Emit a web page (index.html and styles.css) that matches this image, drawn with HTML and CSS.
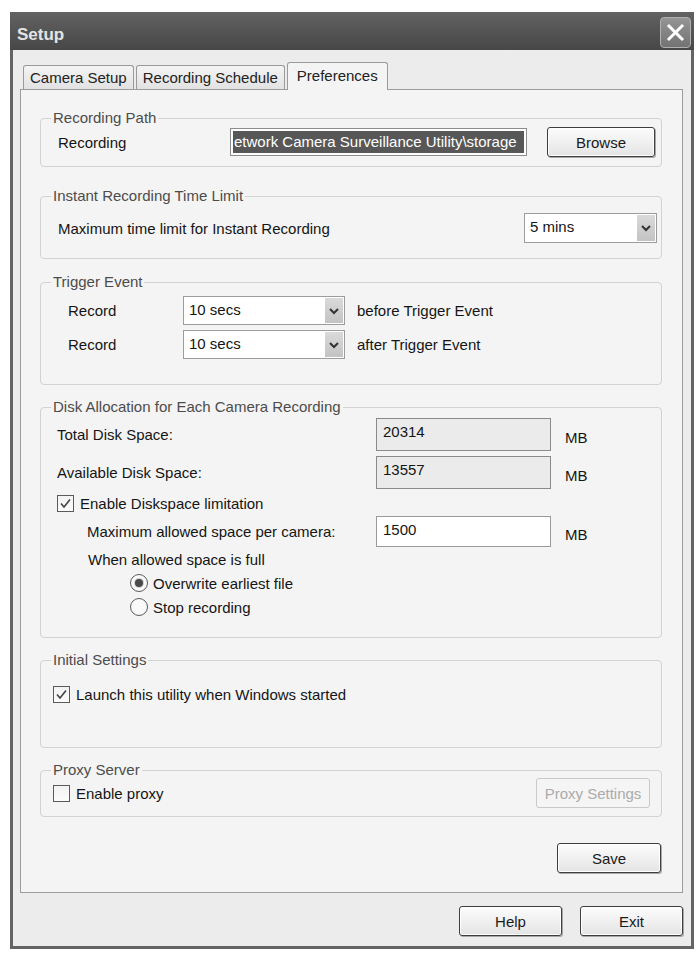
FILE: index.html
```html
<!DOCTYPE html>
<html>
<head>
<meta charset="utf-8">
<title>Setup</title>
<link rel="stylesheet" href="styles.css">
</head>
<body>
<div class="window">
  <div class="titlebar">
    <span class="title">Setup</span>
    <span class="close"><svg width="19" height="19" viewBox="0 0 19 19"><path d="M3 3 L16 16 M16 3 L3 16" stroke="#fff" stroke-width="3" stroke-linecap="square"/></svg></span>
  </div>
  <div class="frame">
    <div class="tabs">
      <div class="tab">Camera Setup</div>
      <div class="tab">Recording Schedule</div>
      <div class="tab active">Preferences</div>
    </div>
    <div class="panel">
      <fieldset class="group g-path">
        <legend>Recording Path</legend>
        <div class="gbody row">
          <span class="lbl w-path">Recording</span>
          <div class="path-field"><span class="sel">etwork Camera Surveillance Utility\storage</span></div>
          <span class="btn browse">Browse</span>
        </div>
      </fieldset>

      <fieldset class="group g-instant">
        <legend>Instant Recording Time Limit</legend>
        <div class="gbody row">
          <span class="lbl grow">Maximum time limit for Instant Recording</span>
          <div class="select s-mins"><span class="val">5 mins</span><span class="arrow"><svg width="12" height="8" viewBox="0 0 12 8"><path d="M2 2 L6 6 L10 2" fill="none" stroke="#333" stroke-width="2"/></svg></span></div>
        </div>
      </fieldset>

      <fieldset class="group g-trigger">
        <legend>Trigger Event</legend>
        <div class="gbody">
          <div class="row trow">
            <span class="lbl w-rec">Record</span>
            <div class="select s-secs"><span class="val">10 secs</span><span class="arrow"><svg width="12" height="8" viewBox="0 0 12 8"><path d="M2 2 L6 6 L10 2" fill="none" stroke="#333" stroke-width="2"/></svg></span></div>
            <span class="lbl after">before Trigger Event</span>
          </div>
          <div class="row trow second">
            <span class="lbl w-rec">Record</span>
            <div class="select s-secs"><span class="val">10 secs</span><span class="arrow"><svg width="12" height="8" viewBox="0 0 12 8"><path d="M2 2 L6 6 L10 2" fill="none" stroke="#333" stroke-width="2"/></svg></span></div>
            <span class="lbl after">after Trigger Event</span>
          </div>
        </div>
      </fieldset>

      <fieldset class="group g-disk">
        <legend>Disk Allocation for Each Camera Recording</legend>
        <div class="gbody">
          <div class="row drow">
            <span class="lbl w-disk">Total Disk Space:</span>
            <span class="num ro">20314</span>
            <span class="unit">MB</span>
          </div>
          <div class="row drow r2">
            <span class="lbl w-disk">Available Disk Space:</span>
            <span class="num ro">13557</span>
            <span class="unit">MB</span>
          </div>
          <div class="row crow">
            <span class="cb"><svg width="15" height="15" viewBox="0 0 15 15"><path d="M3 7.5 L6 11 L12 3.5" fill="none" stroke="#444" stroke-width="1.6"/></svg></span>
            <span class="lbl">Enable Diskspace limitation</span>
          </div>
          <div class="row mrow">
            <span class="lbl w-max">Maximum allowed space per camera:</span>
            <span class="num edit">1500</span>
            <span class="unit">MB</span>
          </div>
          <div class="row full">
            <span class="lbl">When allowed space is full</span>
          </div>
          <div class="row rrow">
            <span class="rb on"><span class="dot"></span></span>
            <span class="lbl">Overwrite earliest file</span>
          </div>
          <div class="row rrow">
            <span class="rb"></span>
            <span class="lbl">Stop recording</span>
          </div>
        </div>
      </fieldset>

      <fieldset class="group g-init">
        <legend>Initial Settings</legend>
        <div class="gbody row">
          <span class="cb"><svg width="15" height="15" viewBox="0 0 15 15"><path d="M3 7.5 L6 11 L12 3.5" fill="none" stroke="#444" stroke-width="1.6"/></svg></span>
          <span class="lbl">Launch this utility when Windows started</span>
        </div>
      </fieldset>

      <fieldset class="group g-proxy">
        <legend>Proxy Server</legend>
        <div class="gbody row">
          <span class="cb"></span>
          <span class="lbl grow">Enable proxy</span>
          <span class="btn disabled proxy">Proxy Settings</span>
        </div>
      </fieldset>

      <div class="save-row"><span class="btn save">Save</span></div>
    </div>
    <div class="footer">
      <span class="btn fbtn">Help</span>
      <span class="btn fbtn">Exit</span>
    </div>
  </div>
</div>
</body>
</html>
```

FILE: styles.css
```css
html, body {
  margin: 0;
  padding: 0;
  background: #ffffff;
}

body {
  font-family: "Liberation Sans", Arial, sans-serif;
  font-size: 15px;
  color: #151515;
}

.window {
  margin: 12px 0 0 10px;
  width: 684px;
}

.titlebar {
  height: 38px;
  display: flex;
  justify-content: space-between;
  align-items: flex-start;
  padding: 0 3px 0 7px;
  box-sizing: border-box;
  background: linear-gradient(#626262, #474747);
}

.title {
  color: #e4e4e4;
  font-weight: bold;
  font-size: 17px;
  line-height: 20px;
  margin-top: 13px;
}

.close {
  margin-top: 5px;
  width: 31px;
  height: 31px;
  box-sizing: border-box;
  border: 1px solid #b0b0b0;
  border-radius: 4px;
  background: linear-gradient(#959595, #737373);
  display: flex;
  align-items: center;
  justify-content: center;
}

.frame {
  border: 3px solid #646464;
  border-top: 0;
  background: #ececec;
  padding: 12px 8px 10px 7px;
}

.tabs {
  display: flex;
  align-items: flex-end;
  gap: 2px;
  padding-left: 3px;
  height: 27px;
}

.tab {
  height: 24px;
  box-sizing: border-box;
  border: 1px solid #9a9a9a;
  border-bottom: 0;
  border-radius: 3px 3px 0 0;
  background: linear-gradient(#f4f4f4, #e2e2e2);
  padding: 0 6px;
  line-height: 24px;
  color: #222;
}

.tab.active {
  height: 28px;
  margin-bottom: -1px;
  position: relative;
  background: #f4f4f4;
  padding: 0 9px;
  line-height: 26px;
}

.panel {
  border: 1px solid #9c9c9c;
  background: #f4f4f4;
  padding: 20px 20px 19px 19px;
  display: flex;
  flex-direction: column;
}

.group {
  margin: 0;
  padding: 0;
  border: 1px solid #d2d2d2;
  border-radius: 4px;
  min-width: 0;
}

.group legend {
  margin-left: 10px;
  padding: 0 2px;
  line-height: 16px;
  color: #4c4c4c;
}

.row {
  display: flex;
  align-items: center;
}

.lbl {
  white-space: nowrap;
}

.grow {
  flex: 1;
}

/* Recording Path */
.g-path .gbody {
  padding: 1px 6px 9px 17px;
  height: 30px;
}

.w-path {
  width: 172px;
}

.path-field {
  width: 297px;
  height: 28px;
  box-sizing: border-box;
  border: 1px solid #8c8c8c;
  background: #fff;
  padding: 2px;
  overflow: hidden;
}

.sel {
  display: block;
  height: 22px;
  line-height: 22px;
  background: #575757;
  color: #fff;
  white-space: nowrap;
  overflow: hidden;
  padding-left: 1px;
}

.browse {
  margin-left: 20px;
  width: 108px;
  height: 30px;
}

/* Buttons */
.btn {
  display: flex;
  align-items: center;
  justify-content: center;
  box-sizing: border-box;
  border: 1px solid #3e3e3e;
  border-radius: 3px;
  background: linear-gradient(#fcfcfc, #e4e4e4);
  box-shadow: inset 0 0 0 1px #ffffff, 1px 1px 0 #a8a8a8;
  color: #1a1a1a;
}

.btn.disabled {
  border-color: #c9c9c9;
  box-shadow: none;
  background: #f5f5f5;
  color: #ababab;
}

/* Selects */
.select {
  display: flex;
  box-sizing: border-box;
  border: 1px solid #9c9c9c;
  background: #fff;
}

.select .val {
  flex: 1;
  padding: 0 5px;
  line-height: 26px;
}

.arrow {
  width: 18px;
  margin: 1px;
  background: linear-gradient(#dadada, #c3c3c3);
  display: flex;
  align-items: center;
  justify-content: center;
}

.s-mins {
  width: 133px;
  height: 30px;
}

.s-secs {
  width: 162px;
  height: 29px;
}

/* Instant */
.g-instant {
  margin-top: 21px;
}

.g-instant .gbody {
  padding: 9px 4px 15px 17px;
}

/* Trigger */
.g-trigger {
  margin-top: 15px;
}

.g-trigger .gbody {
  padding: 6px 6px 25px 27px;
}

.trow.second {
  margin-top: 5px;
}

.w-rec {
  width: 115px;
}

.after {
  margin-left: 12px;
}

/* Disk */
.g-disk {
  margin-top: 14px;
}

.g-disk .gbody {
  padding: 3px 6px 21px 16px;
}

.w-disk {
  width: 319px;
}

.w-max {
  width: 289px;
  margin-left: 30px;
}

.num {
  width: 175px;
  box-sizing: border-box;
  border: 1px solid #8c8c8c;
  padding: 4px 6px;
  line-height: 18px;
  align-self: stretch;
}

.num.ro {
  background: #ebebeb;
  border-color: #8a8a8a;
}

.num.edit {
  background: #fff;
  border-color: #9a9a9a;
}

.unit {
  margin-left: 14px;
  padding-top: 6px;
}

.drow {
  height: 33px;
}

.drow.r2 {
  margin-top: 5px;
}

.crow {
  margin-top: 4px;
  height: 20px;
}

.cb {
  width: 17px;
  height: 17px;
  box-sizing: border-box;
  border: 1px solid #5a5a5a;
  background: linear-gradient(#f2f2f2, #fcfcfc);
  display: flex;
  align-items: center;
  justify-content: center;
  margin-right: 6px;
  flex: none;
}

.mrow {
  margin-top: 3px;
  height: 31px;
}

.full {
  margin-top: 3px;
  height: 18px;
  padding-left: 31px;
}

.rrow {
  margin-top: 6px;
  height: 18px;
  padding-left: 73px;
}

.rb {
  width: 18px;
  height: 18px;
  box-sizing: border-box;
  border: 1px solid #5a5a5a;
  border-radius: 50%;
  background: #fafafa;
  margin-right: 5px;
  display: flex;
  align-items: center;
  justify-content: center;
  flex: none;
}

.rb .dot {
  width: 8px;
  height: 8px;
  border-radius: 50%;
  background: #4a4a4a;
  box-shadow: 0 0 0 1px #cfcfcf;
}

/* Initial */
.g-init {
  margin-top: 14px;
}

.g-init .gbody {
  padding: 18px 6px 44px 12px;
  align-items: center;
}

/* Proxy */
.g-proxy {
  margin-top: 14px;
}

.g-proxy .gbody {
  padding: 0 11px 8px 12px;
}

.proxy {
  width: 114px;
  height: 30px;
}

.save-row {
  margin-top: 26px;
  display: flex;
  justify-content: flex-end;
  padding-right: 1px;
}

.save {
  width: 104px;
  height: 30px;
}

.footer {
  display: flex;
  justify-content: flex-end;
  gap: 18px;
  padding-top: 13px;
}

.fbtn {
  width: 103px;
  height: 30px;
}
```
